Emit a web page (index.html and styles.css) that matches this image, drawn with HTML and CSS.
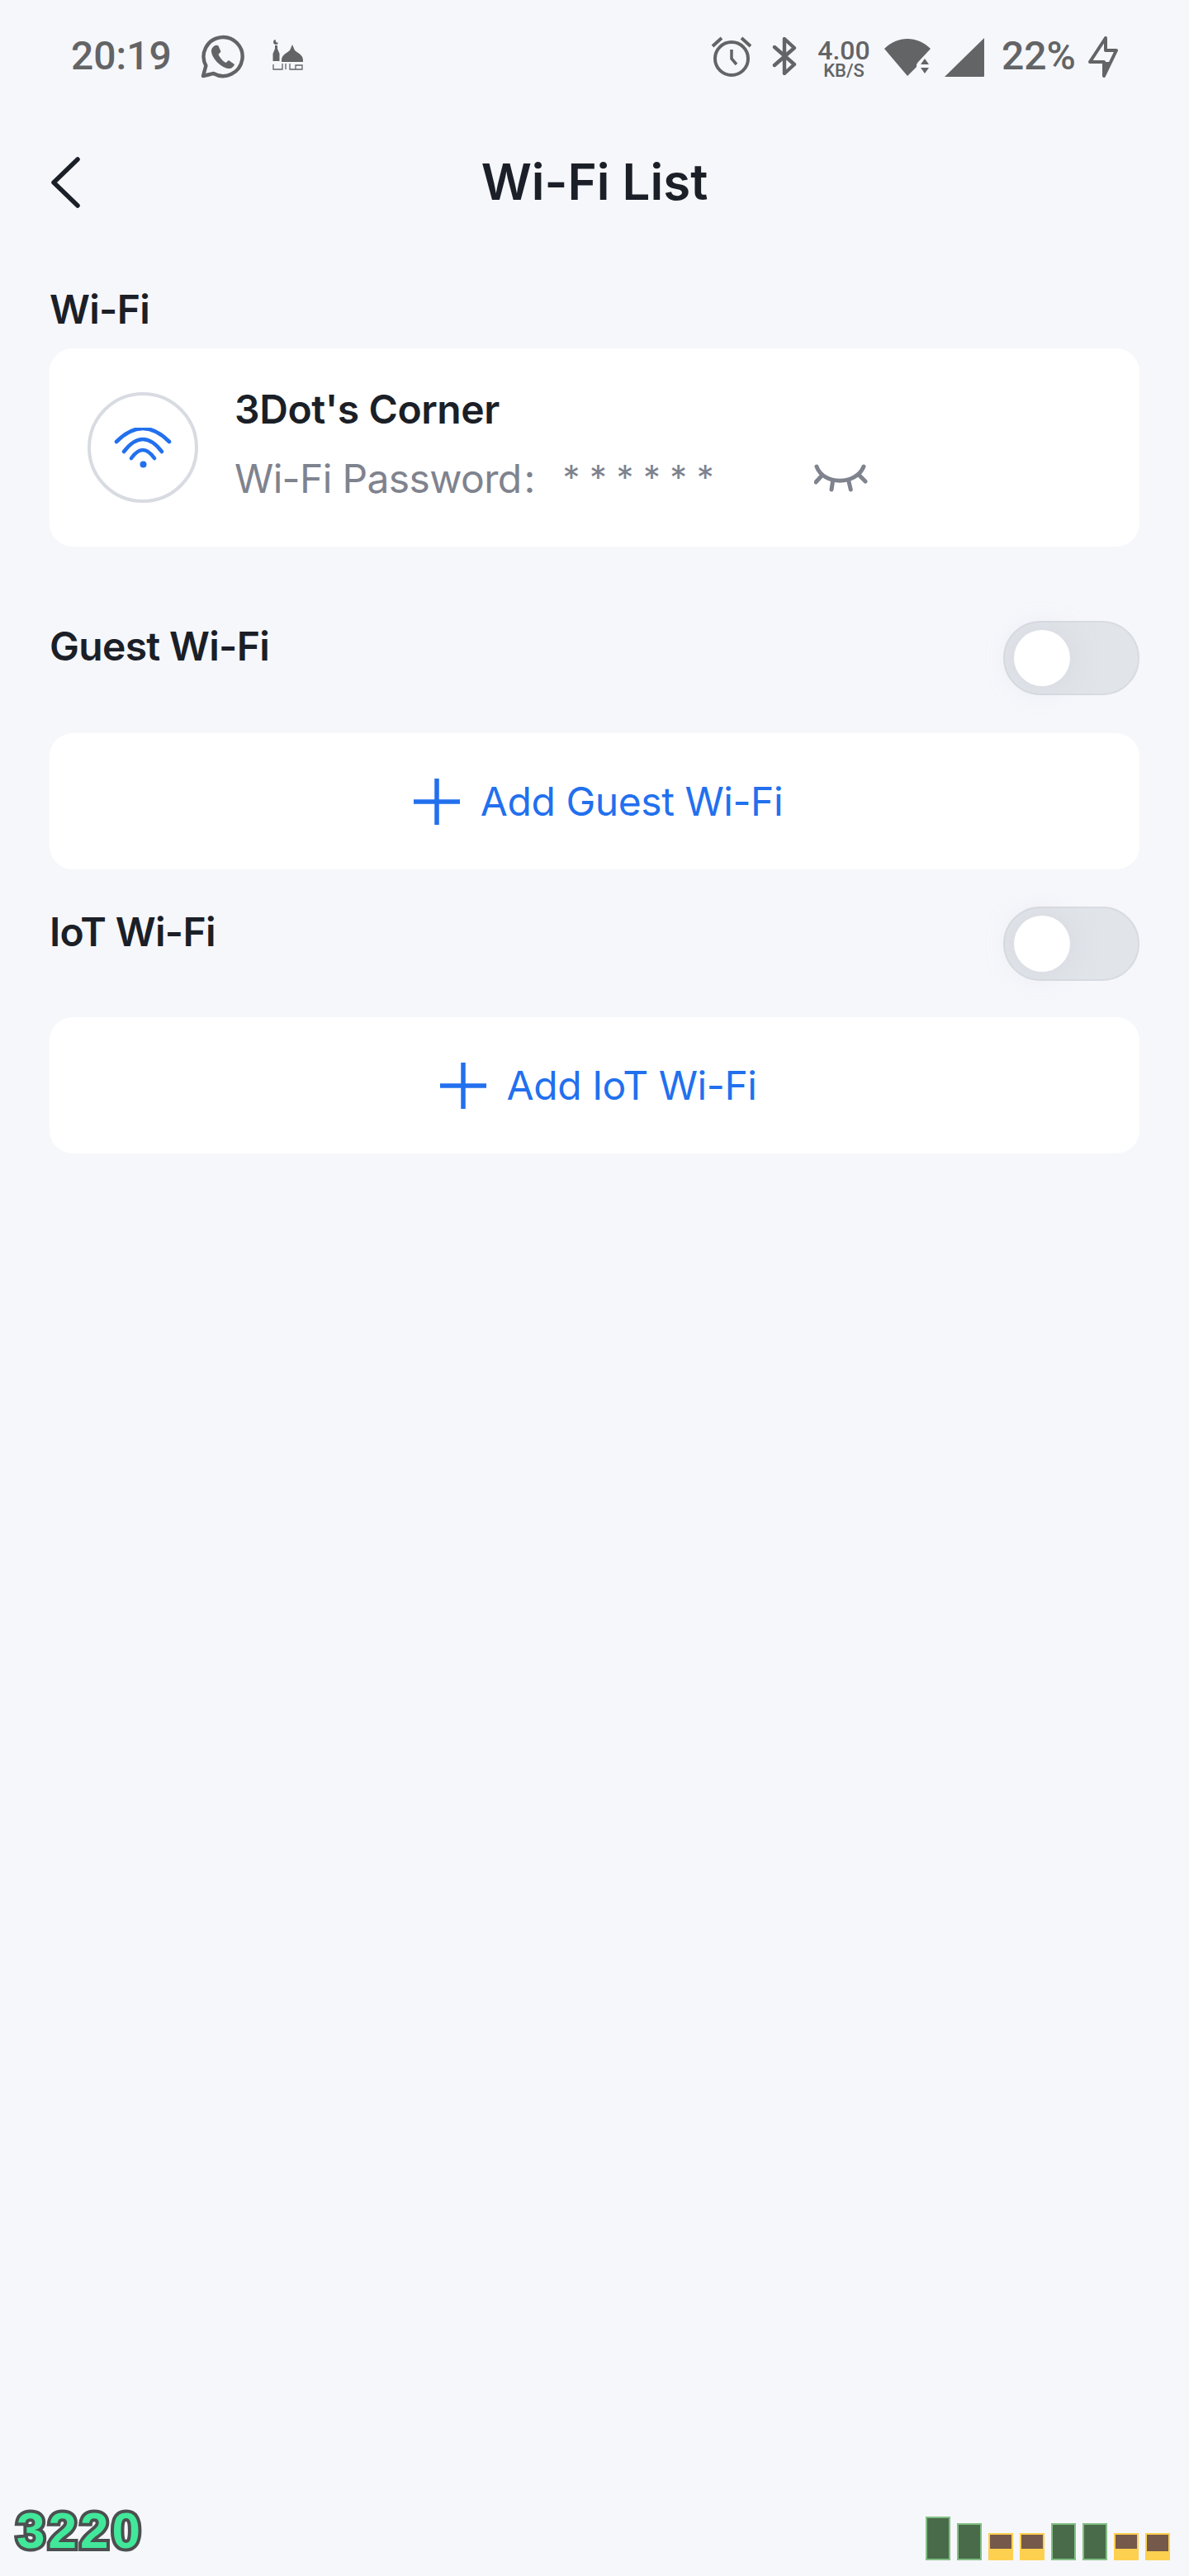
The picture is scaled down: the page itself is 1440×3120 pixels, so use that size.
FILE: index.html
```html
<!DOCTYPE html>
<html lang="en">
<head>
<meta charset="utf-8">
<title>Wi-Fi List</title>
<link rel="stylesheet" href="styles.css">
</head>
<body>
<div class="page">
  <div class="status">
    <div class="status-left">
      <span class="time">20:19</span>
      <svg class="ic-wa" viewBox="0 0 54 54" width="54" height="54"><path d="M4 50l3.400-12.400A23.500 23.500 0 1 1 16.600 47z" fill="none" stroke="#636466" stroke-width="4.400" stroke-linejoin="round"/><path d="M19 13c-2 .6-5 3-5 7 0 7 10 19 20 21 4 .6 7-2 8-5l-7-5-3.500 3c-4-2-7-6-9-10l3-3.500-3-7c-1-.6-2.500-.8-3.500-.5z" fill="#636466"/></svg>
      <svg class="ic-mosque" viewBox="0 0 38 38" width="38" height="38"><path d="M4 0a3 3 0 1 0 3 3.500A2.500 2.500 0 0 1 4 0z" fill="#636466"/><path d="M3 7h3v4l2.500 6v9H.5v-9L3 11z" fill="#636466"/><path d="M11 25c0-7 7-9 10-12l3-7 3 7c3 3 10 5 10 12v2H11z" fill="#636466"/><path d="M1 30v6h11v-7M16 29v7M21 29v7h15v-5h-8v5" fill="none" stroke="#636466" stroke-width="1.300"/></svg>
    </div>
    <div class="status-right">
      <svg class="ic-alarm" viewBox="0 0 50 50" width="50" height="50"><circle cx="25" cy="28" r="20" fill="none" stroke="#636466" stroke-width="4"/><path d="M25 17v11l6 7" fill="none" stroke="#636466" stroke-width="3.500"/><path d="M2 13L13 3M48 13L37 3" stroke="#636466" stroke-width="4" fill="none"/></svg>
      <svg class="ic-bt" viewBox="0 0 32 46" width="32" height="46"><path d="M4 12l24 21-12 11V2l12 11L4 34" fill="none" stroke="#636466" stroke-width="4.400" stroke-linejoin="round" stroke-linecap="round"/></svg>
      <div class="speed"><span class="speed-num">4.00</span><span class="speed-unit">KB/S</span></div>
      <svg class="ic-wifi" viewBox="0 0 58 46" width="58" height="46"><path d="M1 13C17-3 41-3 57 13L43 28c-1 1-3 3-3 5v2l-11 11z" fill="#636466"/><path d="M50 25l5 7H45zM45 36h10l-5 7z" fill="#636466"/></svg>
      <svg class="ic-signal" viewBox="0 0 50 50" width="50" height="50"><path d="M49 2v46a1 1 0 0 1-1 1H1z" fill="#636466"/></svg>
      <span class="batt">22%</span>
      <svg class="ic-bolt" viewBox="0 0 36 50" width="36" height="50"><path d="M21 2v15h13L19 48V31H2z" fill="none" stroke="#636466" stroke-width="4" stroke-linejoin="round"/><path d="M19 31h8l-8 17z" fill="#636466"/></svg>
    </div>
  </div>

  <header class="nav">
    <svg class="back" viewBox="0 0 36 62" width="36" height="62"><path d="M33 3L4 31l29 28" fill="none" stroke="#1b1f27" stroke-width="5.500" stroke-linecap="round" stroke-linejoin="round"/></svg>
    <h1 class="title">Wi-Fi List</h1>
  </header>

  <main class="content">
    <h2 class="section-title wifi-head">Wi-Fi</h2>
    <section class="card wifi-card">
      <div class="wifi-circle">
        <svg viewBox="0 0 70 50" width="70" height="50"><g fill="none" stroke="#2270ee" stroke-width="4.600" stroke-linecap="round"><path d="M3 17Q35 -15 67 17"/><path d="M12 29Q35 -1 58 29"/><path d="M21 37Q35 17 49 37"/></g><circle cx="35.500" cy="44.500" r="4" fill="#2270ee"/></svg>
      </div>
      <div class="wifi-info">
        <div class="ssid">3Dot's Corner</div>
        <div class="pw-row">
          <span class="pw-label">Wi-Fi Password</span><span class="pw-colon">:</span>
          <span class="pw-stars">* * * * * *</span>
          <svg class="eye" viewBox="0 0 66 36" width="66" height="36"><g fill="none" stroke="#7f838e" stroke-width="5" stroke-linecap="round"><path d="M3 3C11 26 51 26 60 3"/><path d="M9.300 14L2 22M22.700 20L21 31M41.700 20L44.300 31M54 13L62 21"/></g></svg>
        </div>
      </div>
    </section>

    <div class="row guest-row">
      <h2 class="section-title row-title">Guest Wi-Fi</h2>
      <div class="toggle"><span class="knob"></span></div>
    </div>
    <section class="card add-card guest-add">
      <svg class="plus" viewBox="0 0 56 56" width="56" height="56"><path d="M28 0v56M0 28h56" stroke="#2270ee" stroke-width="5.500" fill="none"/></svg>
      <span class="add-text">Add Guest Wi-Fi</span>
    </section>

    <div class="row iot-row">
      <h2 class="section-title row-title">IoT Wi-Fi</h2>
      <div class="toggle"><span class="knob"></span></div>
    </div>
    <section class="card add-card iot-add">
      <svg class="plus" viewBox="0 0 56 56" width="56" height="56"><path d="M28 0v56M0 28h56" stroke="#2270ee" stroke-width="5.500" fill="none"/></svg>
      <span class="add-text">Add IoT Wi-Fi</span>
    </section>
  </main>

  <footer class="bottom">
    <span class="score">3220</span>
    <div class="bars">
      <span class="bar green b53"></span>
      <span class="bar green b45"></span>
      <span class="bar amber b33"></span>
      <span class="bar amber b33"></span>
      <span class="bar green b45"></span>
      <span class="bar green b45"></span>
      <span class="bar amber b33"></span>
      <span class="bar amber b33 low"></span>
    </div>
  </footer>
</div>
</body>
</html>
```
FILE: styles.css
```css
* { box-sizing: border-box; }
html, body { margin: 0; padding: 0; }
body { background: #f6f7fb; font-family: Inter, "Liberation Sans", sans-serif; color: #1b1f27; }
.page { width: 1440px; height: 3120px; display: flex; flex-direction: column; overflow: hidden; }

.status { height: 100px; padding: 38px 86px 0; display: flex; justify-content: space-between; align-items: flex-start; color: #636466; font-family: Roboto, sans-serif; }
.status-left, .status-right { display: flex; align-items: flex-start; }
.time { font-size: 48px; font-weight: 500; line-height: 56px; width: 123px; margin-top: 2px; }
.ic-wa { margin-top: 4px; margin-left: 33px; }
.ic-mosque { margin-top: 10px; margin-left: 34px; }
.ic-alarm { margin-top: 5px; margin-right: 23px; }
.ic-bt { margin-top: 7px; margin-right: 23px; }
.speed { display: flex; flex-direction: column; align-items: center; width: 66px; margin-top: 8px; margin-right: 15px; }
.speed-num { font-size: 32px; font-weight: 500; line-height: 30px; }
.speed-unit { font-size: 22px; line-height: 20px; font-weight: 500; }
.ic-wifi { margin-top: 8px; margin-right: 15px; }
.ic-signal { margin-top: 6px; margin-right: 20px; }
.batt { font-size: 48px; font-weight: 500; line-height: 56px; margin-top: 2px; width: 94px; }
.ic-bolt { margin-top: 6px; margin-left: 11px; }

.nav { height: 128px; position: relative; display: flex; align-items: center; justify-content: center; margin-top: 56px; }
.back { position: absolute; left: 61px; top: 34px; }
.title { margin: 0; font-size: 60px; font-weight: 600; line-height: 72px; }

.content { padding: 0 60px; flex: 1; }
.section-title { margin: 0; font-size: 48px; font-weight: 600; line-height: 58px; letter-spacing: -.7px; }
.wifi-head { margin-top: 62px; height: 76px; }
.card { background: #fff; border-radius: 28px; }
.wifi-card { height: 240px; display: flex; align-items: center; padding-left: 46px; }
.wifi-circle { width: 134px; height: 134px; border-radius: 50%; border: 4px solid #d8dbe1; display: flex; align-items: center; justify-content: center; flex: none; padding-top: 2px; }
.wifi-info { margin-left: 44px; display: flex; flex-direction: column; padding-bottom: 8px; }
.ssid { font-size: 48px; font-weight: 600; line-height: 58px; letter-spacing: -.4px; }
.pw-row { display: flex; align-items: flex-start; color: #7f838e; font-size: 48px; line-height: 58px; margin-top: 26px; }
.pw-label { letter-spacing: -.65px; }
.pw-colon { width: 20px; text-align: center; }
.pw-stars { margin-left: 30px; font-size: 41.500px; line-height: 54px; width: 304px; white-space: pre; }
.eye { margin-top: 11px; }

.row { display: flex; justify-content: space-between; align-items: flex-start; }
.row-title { padding-top: 2px; }
.guest-row { margin-top: 90px; }
.iot-row { margin-top: 45px; }
.toggle { width: 165px; height: 90px; border-radius: 45px; background: #e1e4e9; border: 2px solid #d8dbe1; padding: 9px 0 0 11px; }
.knob { display: block; width: 68px; height: 68px; border-radius: 50%; background: #fff; box-shadow: 0 0 34px rgba(190, 196, 205, .35); }
.add-card { height: 165px; display: flex; align-items: center; justify-content: center; color: #2270ee; font-size: 48px; padding-left: 9px; }
.guest-add { margin-top: 46px; }
.iot-add { margin-top: 44px; }
.add-text { margin-left: 25px; letter-spacing: -.45px; }

.bottom { display: flex; justify-content: space-between; align-items: flex-end; padding: 0 23px 19px 20px; height: 100px; }
.score { font-family: "Liberation Sans", sans-serif; font-weight: 700; font-size: 62px; line-height: 56px; color: #41e89a; -webkit-text-stroke: 8px #4c4f50; paint-order: stroke fill; letter-spacing: 4px; margin-bottom: 8px; }
.bars { display: flex; gap: 8px; align-items: flex-end; }
.bar { width: 30px; display: block; border: 2px solid; }
.green { background: #4a6b4a; border-color: #81bf85; }
.amber { background: linear-gradient(#75594a 0 60%, #fed04f 60%); border-color: #fed04f; }
.low { background: linear-gradient(#75594a 0 69%, #fed04f 69%); }
.b53 { height: 53px; }
.b45 { height: 45px; }
.b33 { height: 33px; }
```
